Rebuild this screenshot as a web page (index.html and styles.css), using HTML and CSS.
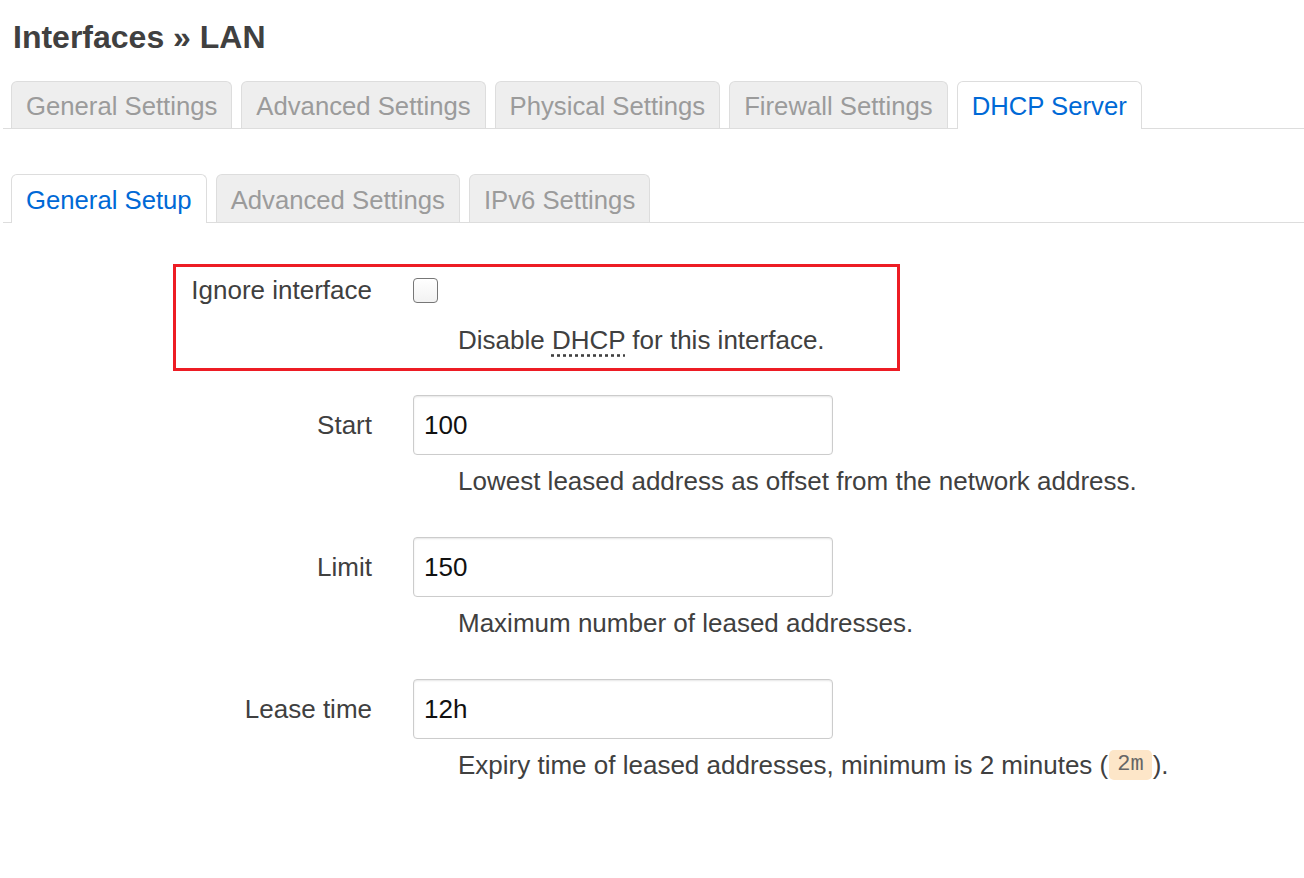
FILE: index.html
```html
<!DOCTYPE html>
<html>
<head>
<meta charset="utf-8">
<link rel="stylesheet" href="styles.css">
</head>
<body>
<div class="page">
  <h2 class="title">Interfaces » LAN</h2>
  <ul class="tabs main-tabs">
    <li class="tab">General Settings</li>
    <li class="tab">Advanced Settings</li>
    <li class="tab">Physical Settings</li>
    <li class="tab">Firewall Settings</li>
    <li class="tab active">DHCP Server</li>
  </ul>
  <ul class="tabs sub-tabs">
    <li class="tab active">General Setup</li>
    <li class="tab">Advanced Settings</li>
    <li class="tab">IPv6 Settings</li>
  </ul>
  <div class="form">
    <div class="highlight">
      <div class="row row-check">
        <label class="label">Ignore interface</label>
        <div class="control"><input type="checkbox" class="check"></div>
      </div>
      <div class="desc desc-check">Disable <abbr class="abbr">DHCP</abbr> for this interface.</div>
    </div>
    <div class="field">
      <div class="row">
        <label class="label">Start</label>
        <div class="control"><input type="text" class="text-input" value="100"></div>
      </div>
      <div class="desc">Lowest leased address as offset from the network address.</div>
    </div>
    <div class="field">
      <div class="row">
        <label class="label">Limit</label>
        <div class="control"><input type="text" class="text-input" value="150"></div>
      </div>
      <div class="desc">Maximum number of leased addresses.</div>
    </div>
    <div class="field">
      <div class="row">
        <label class="label">Lease time</label>
        <div class="control"><input type="text" class="text-input" value="12h"></div>
      </div>
      <div class="desc">Expiry time of leased addresses, minimum is 2 minutes (<code class="code">2m</code>).</div>
    </div>
  </div>
</div>
</body>
</html>
```
FILE: styles.css
```css
html, body {
  margin: 0;
  padding: 0;
  background: #fff;
}
body {
  font-family: "Liberation Sans", Arial, sans-serif;
  font-size: 26px;
  color: #404040;
}
.page {
  padding-left: 3px;
}
.title {
  margin: 0 0 0 10px;
  padding-top: 16px;
  font-size: 32px;
  line-height: 42px;
  font-weight: bold;
  color: #404040;
}
.tabs {
  list-style: none;
  margin: 0;
  padding: 0 0 0 8px;
  display: flex;
  align-items: flex-start;
  gap: 9px;
  border-bottom: 1px solid #ddd;
}
.main-tabs {
  margin-top: 23px;
}
.sub-tabs {
  margin-top: 45px;
}
.tab {
  box-sizing: border-box;
  height: 47px;
  line-height: 44px;
  padding: 2px 14px 0 14px;
  font-size: 25.7px;
  background: #eee;
  border: 1px solid #ddd;
  border-bottom: none;
  border-radius: 6px 6px 0 0;
  color: #9b9b9b;
  white-space: nowrap;
}
.sub-tabs .tab {
  height: 48px;
  padding-top: 3px;
}
.tab.active {
  background: #fff;
  color: #0069d6;
  height: 48px;
  margin-bottom: -1px;
}
.sub-tabs .tab.active {
  height: 49px;
}
.form {
  padding-top: 41px;
}
.highlight {
  margin-left: 170px;
  width: 721px;
  border: 3px solid #ed1c24;
  padding: 8px 0 13px 0;
  --label-w: 196px;
}
.field {
  margin-top: 24px;
}
.field + .field {
  margin-top: 41px;
}
.row {
  display: grid;
  grid-template-columns: var(--label-w, 369px) 1fr;
  column-gap: 41px;
  align-items: center;
}
.row-check {
  height: 30px;
}
.label {
  text-align: right;
  line-height: 30px;
  color: #404040;
}
.control {
  display: flex;
  align-items: center;
}
.check {
  appearance: none;
  -webkit-appearance: none;
  margin: 0;
  width: 25px;
  height: 25px;
  border: 1px solid #777;
  border-radius: 4px;
  background: linear-gradient(#fff, #f2f2f2);
  box-sizing: border-box;
}
.text-input {
  box-sizing: border-box;
  width: 420px;
  height: 60px;
  margin: 0;
  padding: 0 10px;
  border: 1px solid #ccc;
  border-radius: 4px;
  box-shadow: inset 0 1px 2px rgba(0, 0, 0, 0.1);
  font-family: "Liberation Sans", Arial, sans-serif;
  font-size: 26px;
  color: #111;
  background: #fff;
}
.desc {
  margin-top: 11px;
  margin-left: 455px;
  line-height: 30px;
  color: #404040;
  white-space: nowrap;
}
.desc-check {
  margin-top: 20px;
  margin-left: 282px;
}
.abbr {
  text-decoration: underline dotted #404040;
  text-underline-offset: 5px;
}
.code {
  display: inline-block;
  font-family: "Liberation Mono", "Courier New", monospace;
  font-size: 22px;
  line-height: 30px;
  padding: 0 8px;
  margin: 0 1px;
  background: #fde6c8;
  border-radius: 5px;
  color: #666;
  vertical-align: top;
}
```
